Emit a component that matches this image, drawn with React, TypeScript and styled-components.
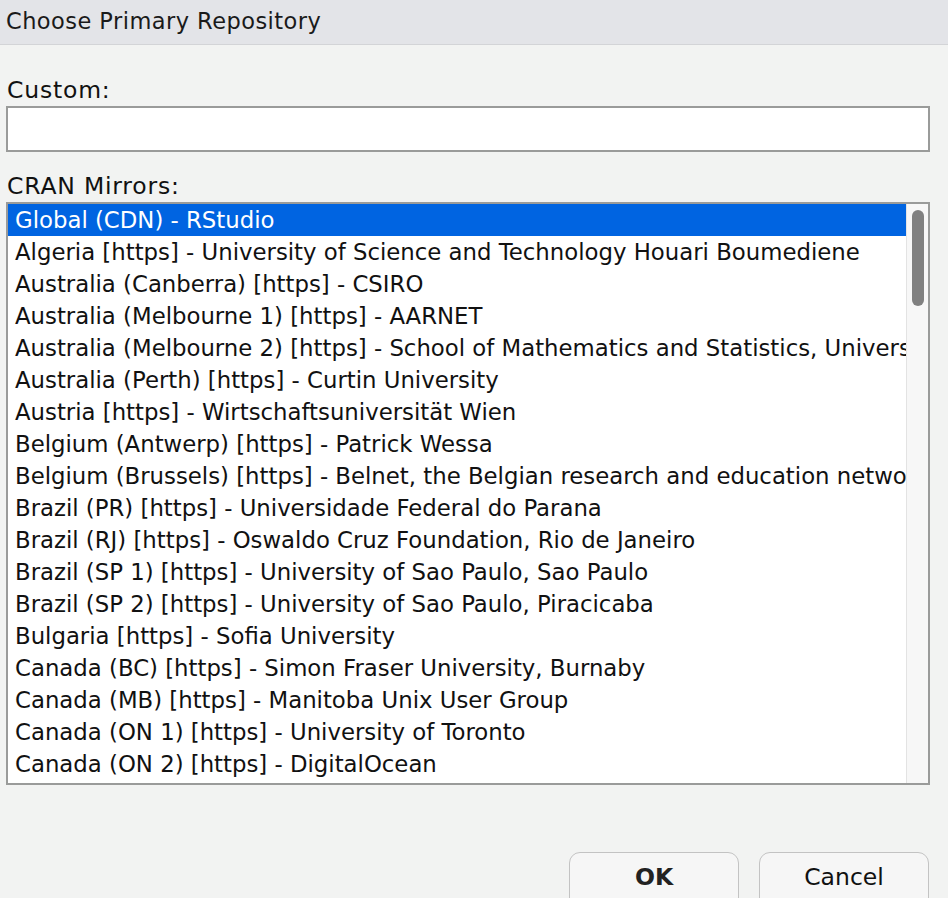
import React from "react";
import styled, { createGlobalStyle } from "styled-components";

const Global = createGlobalStyle`
  html, body { margin: 0; padding: 0; background: #f2f3f2; }
  body { font-family: "DejaVu Sans", "Liberation Sans", sans-serif; color: #111; overflow: hidden; }
`;

const Dialog = styled.div`
  width: 948px;
  height: 898px;
  display: flex;
  flex-direction: column;
  background: #f2f3f2;
  overflow: hidden;
`;

const TitleBar = styled.div`
  height: 45px;
  flex: none;
  box-sizing: border-box;
  background: #e3e4e8;
  border-bottom: 1px solid #d3d4d7;
  display: flex;
  align-items: center;
  padding: 0 0 3px 6px;
  font-size: 22.5px;
  letter-spacing: 0.45px;
  color: #1a1a1a;
`;

const Body = styled.div`
  display: flex;
  flex-direction: column;
  padding: 0 18px 0 6px;
  flex: 1;
`;

const Label = styled.div<{ $top: number }>`
  font-size: 23.5px;
  letter-spacing: 0.8px;
  line-height: 26px;
  margin-top: ${(p) => p.$top}px;
  padding-left: 1px;
  height: 29px;
`;

const Input = styled.input`
  display: block;
  width: 924px;
  height: 46px;
  box-sizing: border-box;
  border: 2px solid #9a9b9a;
  background: #fff;
  margin: 0;
  outline: none;
`;

const ListBox = styled.div`
  width: 924px;
  height: 583px;
  box-sizing: border-box;
  border: 2px solid #9a9b9a;
  background: #fff;
  display: flex;
`;

const Rows = styled.div`
  flex: 1;
  min-width: 0;
  overflow: hidden;
  display: flex;
  flex-direction: column;
`;

const Row = styled.div<{ $selected?: boolean }>`
  height: 32px;
  flex: none;
  display: flex;
  align-items: center;
  padding-left: 7px;
  font-size: 22.8px;
  white-space: nowrap;
  overflow: hidden;
  background: ${(p) => (p.$selected ? "#0064e1" : "transparent")};
  color: ${(p) => (p.$selected ? "#fff" : "#111")};
`;

const Track = styled.div`
  width: 21px;
  flex: none;
  background: #f7f7f7;
  border-left: 1px solid #e3e3e3;
  display: flex;
  justify-content: center;
  padding-top: 6px;
`;

const Thumb = styled.div`
  width: 12px;
  height: 96px;
  border-radius: 6px;
  background: #808080;
`;

const Footer = styled.div`
  display: flex;
  justify-content: flex-end;
  gap: 20px;
  margin-top: 67px;
  padding-right: 1px;
`;

const Button = styled.button<{ $bold?: boolean }>`
  width: 170px;
  height: 60px;
  box-sizing: border-box;
  border: 1.5px solid #c3c3c3;
  border-radius: 11px;
  background: #f6f6f6;
  font-family: "DejaVu Sans", "Liberation Sans", sans-serif;
  font-size: 23.5px;
  font-weight: ${(p) => (p.$bold ? 700 : 400)};
  color: ${(p) => (p.$bold ? "#222" : "#111")};
  padding: 0 0 10px 0;
  display: flex;
  align-items: center;
  justify-content: center;
`;

const mirrors = [
  "Global (CDN) - RStudio",
  "Algeria [https] - University of Science and Technology Houari Boumediene",
  "Australia (Canberra) [https] - CSIRO",
  "Australia (Melbourne 1) [https] - AARNET",
  "Australia (Melbourne 2) [https] - School of Mathematics and Statistics, University of Melbourne",
  "Australia (Perth) [https] - Curtin University",
  "Austria [https] - Wirtschaftsuniversität Wien",
  "Belgium (Antwerp) [https] - Patrick Wessa",
  "Belgium (Brussels) [https] - Belnet, the Belgian research and education network",
  "Brazil (PR) [https] - Universidade Federal do Parana",
  "Brazil (RJ) [https] - Oswaldo Cruz Foundation, Rio de Janeiro",
  "Brazil (SP 1) [https] - University of Sao Paulo, Sao Paulo",
  "Brazil (SP 2) [https] - University of Sao Paulo, Piracicaba",
  "Bulgaria [https] - Sofia University",
  "Canada (BC) [https] - Simon Fraser University, Burnaby",
  "Canada (MB) [https] - Manitoba Unix User Group",
  "Canada (ON 1) [https] - University of Toronto",
  "Canada (ON 2) [https] - DigitalOcean",
];

export default function App() {
  return (
    <Dialog>
      <Global />
      <TitleBar>Choose Primary Repository</TitleBar>
      <Body>
        <Label $top={32}>Custom:</Label>
        <Input type="text" />
        <Label $top={21}>CRAN Mirrors:</Label>
        <ListBox>
          <Rows>
            {mirrors.map((m, i) => (
              <Row key={m} $selected={i === 0}>
                {m}
              </Row>
            ))}
          </Rows>
          <Track>
            <Thumb />
          </Track>
        </ListBox>
        <Footer>
          <Button $bold>OK</Button>
          <Button>Cancel</Button>
        </Footer>
      </Body>
    </Dialog>
  );
}
